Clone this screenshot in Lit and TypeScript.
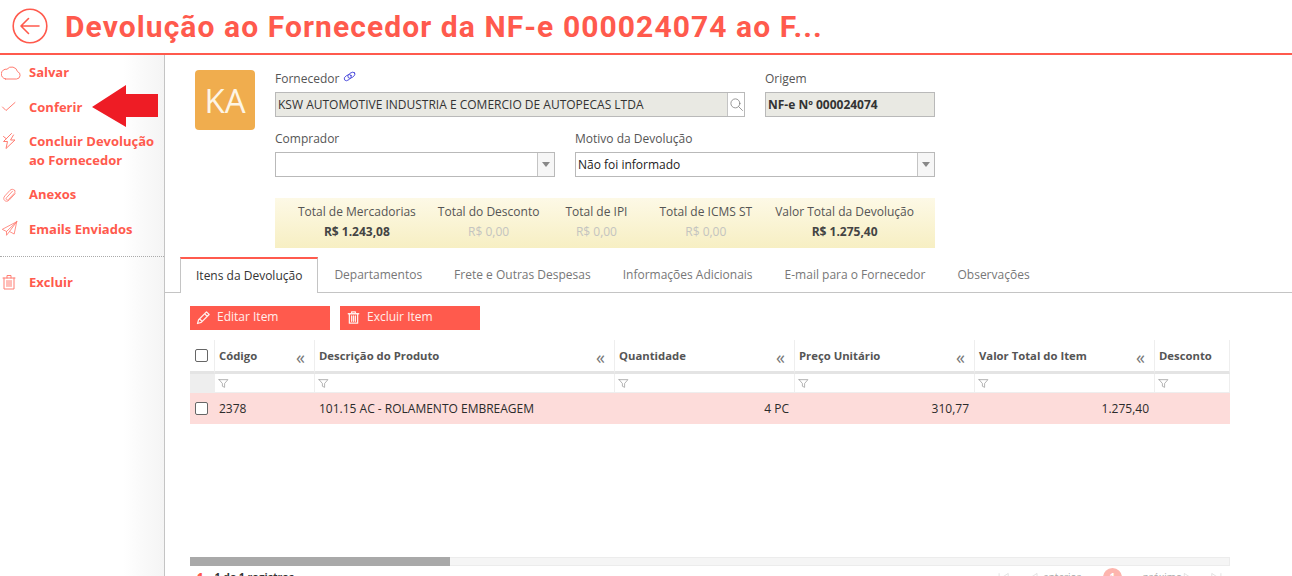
import { LitElement, html, css, svg } from "lit";
import { customElement } from "lit/decorators.js";

const ic = (body: unknown, size = 20) => html`<svg width=${size} height=${size} viewBox="0 0 20 20" fill="none" stroke="currentColor" stroke-width="1" stroke-linecap="round" stroke-linejoin="round">${body}</svg>`;

const cloud = svg`<path d="M4.500 16h11a3.800 3.800 0 0 0 1-7.400A6 6 0 0 0 6 6.200 4.900 4.900 0 0 0 4.500 16z"/>`;
const check = svg`<path d="M1.500 9l3.500 3.500L14 4.500"/>`;
const bolt = svg`<path d="M10.500 1.500L2.500 9.500h4L5 16.500l9-8.500H9.500L12.500 3M2.500 4.500l2.500 2"/>`;
const clip = svg`<g transform="translate(.5 1.500) scale(.85)"><path d="M15.500 4.500c-1.800-1.800-4-1.500-5.500 0L4 11c-2 2.300-1.500 4.300-.3 5.400 1.200 1.200 3.300 1.500 5.300-.4l7-7.500M13 5.500L6 13c-1 1.200-.7 2 0 2.500.7.600 1.500.500 2.500-.5L15 8c1.200-1.300 1-2.500.5-3.500"/></g>`;
const plane = svg`<g transform="scale(.85)"><path d="M18.500 2L1.500 11l5 2.500L18.500 2zM18.500 2L15.500 16.500l-5.500-3L18.500 2zM6.500 13.500V18l3.500-4.500"/></g>`;
const trashSide = svg`<path d="M2 5h12M6 5V2.500h4V5M3 5v11h10V5M6 7.500v6M8 7.500v6M10 7.500v6"/>`;
const trash = svg`<path d="M3 5h14M7.500 5V2.500h5V5M4.500 5v12.500h11V5M7.500 8v7M10 8v7M12.500 8v7"/>`;
const link = svg`<ellipse cx="6" cy="9.500" rx="5" ry="3" transform="rotate(-35 6 9.500)"/><ellipse cx="10.500" cy="6.500" rx="5" ry="3" transform="rotate(-35 10.500 6.500)"/>`;
const search = svg`<circle cx="8.500" cy="8.500" r="6"/><path d="M13 13l5 5"/>`;
const filter = svg`<path d="M2 3h16l-6 7v7l-4-2v-5L2 3z"/>`;
const pencil = svg`<path d="M14 2.500l3.500 3.500L7 16.500l-5 1.500 1.500-5L14 2.500zM11.500 5l3.500 3.500M5 12l3 3"/>`;
const prevEnd = svg`<path d="M2 3v14M18 3L7 10l11 7z"/>`;
const prev = svg`<path d="M14 3L3 10l11 7z"/>`;
const next = svg`<path d="M3 3l11 7-11 7z"/>`;
const nextEnd = svg`<path d="M18 3v14M2 3l11 7-11 7z"/>`;

const columns = [
  { label: "Código", collapse: true },
  { label: "Descrição do Produto", collapse: true },
  { label: "Quantidade", collapse: true },
  { label: "Preço Unitário", collapse: true },
  { label: "Valor Total do Item", collapse: true },
  { label: "Desconto", collapse: false },
];

const totals = [
  { label: "Total de Mercadorias", value: "R$ 1.243,08", strong: true, gap: 22 },
  { label: "Total do Desconto", value: "R$ 0,00", strong: false, gap: 26 },
  { label: "Total de IPI", value: "R$ 0,00", strong: false, gap: 32 },
  { label: "Total de ICMS ST", value: "R$ 0,00", strong: false, gap: 23 },
  { label: "Valor Total da Devolução", value: "R$ 1.275,40", strong: true, gap: 21 },
];

const tabs = ["Departamentos", "Frete e Outras Despesas", "Informações Adicionais", "E-mail para o Fornecedor", "Observações"];

@customElement("app-root")
export class AppRoot extends LitElement {
  static styles = css`
    :host {
      display: block;
      position: relative;
      height: 576px;
      overflow: hidden;
      background: #fff;
      font-family: "Open Sans", sans-serif;
      font-size: 12px;
      color: #333;
    }
    * { box-sizing: border-box; }
    svg { display: block; flex: none; }

    .header {
      height: 55px;
      border-bottom: 2px solid #ff5a4d;
      display: flex;
      align-items: center;
      padding-left: 12px;
      gap: 17px;
      color: #ff5a4d;
    }
    .back { width: 36px; height: 36px; margin-top: -1px; }
    .title {
      font-family: "Roboto", sans-serif;
      font-size: 30px;
      font-weight: 700;
      letter-spacing: 1.08px;
      white-space: nowrap;
    }

    .body { display: flex; height: 521px; }
    .side {
      width: 165px;
      flex: none;
      border-right: 1px solid #c4c4c4;
      background: linear-gradient(to right, #fff 75%, #f4f4f4 100%);
    }
    .item {
      display: flex;
      align-items: flex-start;
      gap: 8px;
      padding: 8px 0 7px 1px;
      color: #ff5a4d;
      font-size: 13px;
      font-weight: 700;
      line-height: 19px;
    }
    .item.tight { margin-top: -1px; }
    .item svg { color: #ff7d72; }
    .divider { border-top: 1px dotted #aaa; margin: 9px 0 8px; }

    .main { flex: 1; min-width: 0; display: flex; flex-direction: column; }
    .top { display: flex; gap: 20px; padding: 15px 0 0 30px; }
    .avatar {
      width: 60px; height: 60px;
      background: #f0ad4e;
      border-radius: 4px;
      color: #fdf5e6;
      font-size: 33px;
      display: flex; align-items: center; justify-content: center;
    }
    .form { width: 660px; display: flex; flex-direction: column; }
    .row { display: flex; gap: 20px; }
    .row + .row { margin-top: 13px; }
    .field { display: flex; flex-direction: column; }
    .w470 { width: 470px; } .w170 { width: 170px; } .w280 { width: 280px; } .w360 { width: 360px; }
    .label {
      height: 22px; line-height: 17px;
      color: #555; font-size: 12px;
      display: flex; gap: 4px; align-items: flex-start;
    }
    .label svg { color: #3b3bd8; }
    .input {
      height: 25px;
      border: 1px solid #b9b9b9;
      display: flex;
      align-items: center;
      background: #fff;
      font-size: 12px;
      color: #222;
    }
    .input.ro { background: #e9e9e3; color: #333; }
    .input .val { flex: 1; padding-left: 2px; white-space: nowrap; overflow: hidden; }
    .addon {
      width: 17px; height: 23px; flex: none;
      border-left: 1px solid #c4c4c4;
      background: #fff;
      display: flex; align-items: center; justify-content: center;
      color: #777;
    }
    .addon.sel { background: #f6f6f6; }
    .caret { width: 0; height: 0; border: 4px solid transparent; border-top: 5px solid #888; border-bottom: 0; }
    .strong { font-weight: 700; }

    .totals {
      margin-top: 21px;
      height: 50px;
      background: linear-gradient(#fdf9e6, #f7efc3);
      display: flex;
      justify-content: flex-end;
      padding-top: 4px;
    }
    .total { display: flex; flex-direction: column; align-items: center; white-space: nowrap; color: #555; line-height: 19px; }
    .total .v { color: #c4c4c0; margin-top: 1px; }
    .total .v.on { color: #444; font-weight: 700; }

    .tabs {
      margin-top: 9px;
      height: 36px;
      display: flex;
      border-bottom: 1px solid #c4c4c4;
      padding-left: 15px;
      color: #777;
    }
    .tab { padding: 9px 16px 0; line-height: 17px; white-space: nowrap; }
    .tab.active {
      border: 1px solid #c4c4c4;
      border-top: 2px solid #ff5a4d;
      border-bottom: 0;
      height: 36px;
      background: #fff;
      color: #333;
      padding: 8px 15px 0;
    }

    .buttons { display: flex; gap: 10px; padding: 13px 0 0 25px; }
    .btn {
      width: 140px; height: 24px;
      background: #ff5a4d;
      color: #ffeeeb;
      display: flex; align-items: center;
      gap: 6px;
      padding: 0 0 4px 6px;
    }
    .btn svg { stroke-width: 1.700; width: 15px; height: 15px; margin-top: 2px; }

    .table {
      margin: 10px 0 0 25px;
      width: 1040px;
      display: grid;
      grid-template-columns: 25px 100px 300px 180px 180px 180px 75px;
    }
    .th {
      height: 34px;
      border-bottom: 3px solid #e4e4e4;
      border-right: 1px solid #eee;
      display: flex; align-items: center; justify-content: space-between;
      padding: 0 9px 0 4px;
      font-weight: 700; font-size: 11.300px; color: #555;
      white-space: nowrap;
    }
    .th.sel { padding: 0 4px; }
    .th:last-child { border-right: 0; }
    .th .c { color: #777; font-weight: 400; font-size: 18px; line-height: 1; margin-top: 2px; }
    .fl {
      height: 19px;
      border-right: 1px solid #eee;
      display: flex; align-items: center; padding-left: 3px;
      color: #777;
      border-bottom: 1px solid #eee;
    }
    .fl.first { background: #eee; }
    .td {
      height: 31px;
      background: #fddcda;
      display: flex; align-items: center;
      padding: 0 4px;
      color: #2b2b2b;
      white-space: nowrap;
    }
    .td.r { justify-content: flex-end; padding-right: 6px; }
    .box { flex: none; width: 13px; height: 13px; border: 1px solid #666; border-radius: 2px; background: #fff; margin-left: 1px; }

    .scroll {
      margin: 133px 0 0 25px; width: 1040px; height: 9px;
      background: #f5f5f5; border: 1px solid #ececec; flex: none;
    }
    .thumb { width: 260px; height: 9px; margin: -1px 0 0 -1px; background: #a9a9a9; }
    .pager {
      display: flex;
      height: 20px;
      margin: 2px 0 0 32px;
      width: 1025px;
      align-items: flex-start;
      font-size: 10px;
      flex: none;
    }
    .count { font-weight: 700; font-size: 10.500px; color: #333; padding-top: 2px; display: flex; gap: 3px; white-space: pre; }
    .count b { color: #ff5a4d; margin-right: 2px; }
    .pg { margin-left: auto; display: flex; align-items: flex-start; color: #aaa; padding-top: 2px; gap: 5px; }
    .pg span { white-space: nowrap; }
    .pg svg { color: #ccc; margin-top: 2px; }
    .pg .far-l { margin-left: 15px; }
    .pg .far-r { margin-left: 12px; }
    .pg .tuck-l { margin-left: -2px; }
    .pg .tuck-r { margin-left: -4px; }
    .pg .bullet {
      width: 19px; height: 19px; border-radius: 50%;
      background: #fdb5ae; color: #fff; text-align: center; font-weight: 700;
      margin: -2px 16px 0 17px; line-height: 19px;
    }
    .arrow { position: absolute; left: 92px; top: 85px; }
  `;

  private sideItem(icon: unknown, label: unknown, cls = "") {
    return html`<div class="item ${cls}">${ic(icon, 20)}<span>${label}</span></div>`;
  }

  render() {
    return html`
      <div class="header">
        <svg class="back" viewBox="0 0 36 36" fill="none" stroke="currentColor" stroke-width="1.600">
          <circle cx="18" cy="18" r="16.800" />
          <path d="M27 18H9.500M16.500 10.500L9 18l7.500 7.500" stroke-linecap="round" stroke-linejoin="round" />
        </svg>
        <div class="title">Devolução ao Fornecedor da NF-e 000024074 ao F...</div>
      </div>
      <div class="body">
        <aside class="side">
          ${this.sideItem(cloud, "Salvar")}
          ${this.sideItem(check, "Conferir")}
          ${this.sideItem(bolt, html`Concluir Devolução<br />ao Fornecedor`, "tight")}
          ${this.sideItem(clip, "Anexos")}
          ${this.sideItem(plane, "Emails Enviados")}
          <div class="divider"></div>
          ${this.sideItem(trashSide, "Excluir")}
        </aside>
        <main class="main">
          <section class="top">
            <div class="avatar">KA</div>
            <div class="form">
              <div class="row">
                <div class="field w470">
                  <div class="label">Fornecedor ${ic(link, 16)}</div>
                  <div class="input ro">
                    <div class="val">KSW AUTOMOTIVE INDUSTRIA E COMERCIO DE AUTOPECAS LTDA</div>
                    <div class="addon">${ic(search, 15)}</div>
                  </div>
                </div>
                <div class="field w170">
                  <div class="label">Origem</div>
                  <div class="input ro"><div class="val strong">NF-e Nº 000024074</div></div>
                </div>
              </div>
              <div class="row">
                <div class="field w280">
                  <div class="label">Comprador</div>
                  <div class="input"><div class="val"></div><div class="addon sel"><div class="caret"></div></div></div>
                </div>
                <div class="field w360">
                  <div class="label">Motivo da Devolução</div>
                  <div class="input"><div class="val">Não foi informado</div><div class="addon sel"><div class="caret"></div></div></div>
                </div>
              </div>
              <div class="totals">
                ${totals.map(
                  (t) => html`<div class="total" style="margin-right:${t.gap}px">
                    <span>${t.label}</span><span class="v ${t.strong ? "on" : ""}">${t.value}</span>
                  </div>`
                )}
              </div>
            </div>
          </section>

          <nav class="tabs">
            <div class="tab active">Itens da Devolução</div>
            ${tabs.map((t) => html`<div class="tab">${t}</div>`)}
          </nav>

          <div class="buttons">
            <div class="btn">${ic(pencil, 15)}<span>Editar Item</span></div>
            <div class="btn">${ic(trash, 15)}<span>Excluir Item</span></div>
          </div>

          <div class="table">
            <div class="th sel"><div class="box"></div></div>
            ${columns.map(
              (c) => html`<div class="th"><span>${c.label}</span>${c.collapse ? html`<span class="c">«</span>` : ""}</div>`
            )}
            <div class="fl first"></div>
            ${columns.map(() => html`<div class="fl">${ic(filter, 11)}</div>`)}
            <div class="td"><div class="box"></div></div>
            <div class="td">2378</div>
            <div class="td">101.15 AC - ROLAMENTO EMBREAGEM</div>
            <div class="td r">4 PC</div>
            <div class="td r">310,77</div>
            <div class="td r">1.275,40</div>
            <div class="td"></div>
          </div>

          <div class="scroll"><div class="thumb"></div></div>
          <div class="pager">
            <span class="count"><b>1</b><span>-</span><span>1 de 1 registros</span></span>
            <div class="pg">
              ${ic(prevEnd, 11)}
              <div class="far-l">${ic(prev, 11)}</div><span class="tuck-l">anterior</span>
              <div class="bullet">1</div>
              <span>próximo</span><div class="tuck-r">${ic(next, 11)}</div>
              <div class="far-r">${ic(nextEnd, 11)}</div>
            </div>
          </div>
        </main>
      </div>
      <svg class="arrow" width="66" height="42" viewBox="0 0 66 42"><path fill="#ee1c25" d="M0 22L34 0v9h32v23H34v10z"/></svg>
    `;
  }
}
